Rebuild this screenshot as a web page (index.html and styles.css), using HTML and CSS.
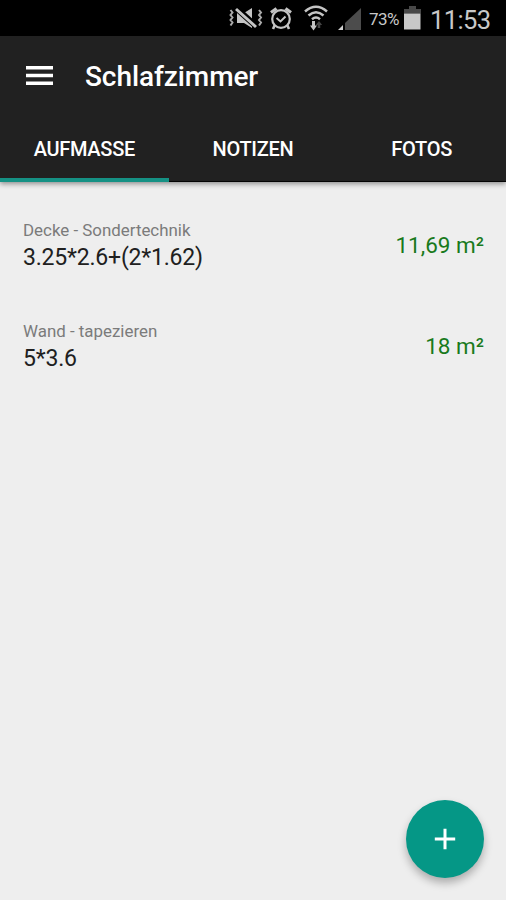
FILE: index.html
```html
<!DOCTYPE html>
<html lang="de">
<head>
<meta charset="utf-8">
<title>Schlafzimmer</title>
<link rel="stylesheet" href="styles.css">
</head>
<body>
<div class="status">
  <svg class="mute" width="34" height="36" viewBox="0 0 34 36" fill="none">
    <path d="M8 13h7l8-5v20l-8-5H8z" fill="#c4c4c4"/>
    <path d="M7 8L28 27" stroke="#000" stroke-width="6"/>
    <path d="M7 9L27 27" stroke="#c4c4c4" stroke-width="3"/>
    <path d="M1.500 10l2 2.500-2 2.500 2 2.500-2 2.500 2 2.500-2 3M30 10l2 2.500-2 2.500 2 2.500-2 2.500 2 2.500-2 3" stroke="#aaa" stroke-width="2"/>
  </svg>
  <svg class="alarm" width="22" height="36" viewBox="0 0 22 36" fill="none" stroke="#c4c4c4">
    <circle cx="11" cy="19" r="8.800" stroke-width="2.200"/>
    <path d="M1 12.500l5.500-4M15.500 8.500l5.500 4" stroke-width="3.200"/>
    <path d="M4.800 25L3 29M17.200 25l1.800 4" stroke-width="2.600"/>
    <path d="M6.500 18l4 3.500 5-5" stroke-width="2"/>
  </svg>
  <svg class="wifi" width="24" height="36" viewBox="0 0 24 36" fill="none" stroke="#c4c4c4" stroke-width="2.500">
    <path d="M1 11.500q11-9.500 22 0M4.500 15.500q7.500-6.500 15 0M8 19.200q4-3.300 8 0"/>
    <path d="M9.500 21v6" stroke-width="3"/>
    <path d="M6 25.500h7l-3.500 5z" fill="#c4c4c4" stroke="none"/>
    <path d="M15 28v-5" stroke="#444" stroke-width="2.500"/>
    <path d="M11.800 25l3.200-4 3.200 4z" fill="#444" stroke="none"/>
  </svg>
  <svg class="signal" width="24" height="36" viewBox="0 0 24 36">
    <path d="M23 8v22H7v-7z" fill="#4c4c4c"/>
    <path d="M0 30l5-5v5z" fill="#d0d0d0"/>
  </svg>
  <span class="percent">73%</span>
  <svg class="battery" width="17" height="36" viewBox="0 0 17 36">
    <path d="M5 6h7v3h5v4.500H0V9h5z" fill="#484848"/>
    <path d="M0 13.500h16.500V29.500H0z" fill="#c8c8c8"/>
  </svg>
  <span class="clock">11:53</span>
</div>
<header class="bar">
  <div class="heading">
    <svg class="menu" width="27" height="20" viewBox="0 0 27 20" fill="#fff">
      <path d="M0 0h27v3.500H0zM0 7.700h27v3.500H0zM0 15.500h27v3.500H0z"/>
    </svg>
    <h1 class="title">Schlafzimmer</h1>
  </div>
  <nav class="tabs">
    <div class="tab active"><span>AUFMASSE</span></div>
    <div class="tab"><span>NOTIZEN</span></div>
    <div class="tab"><span>FOTOS</span></div>
  </nav>
</header>
<main class="list">
  <div class="row">
    <div>
      <div class="label">Decke - Sondertechnik</div>
      <div class="formula">3.25*2.6+(2*1.62)</div>
    </div>
    <div class="area">11,69 m²</div>
  </div>
  <div class="row">
    <div>
      <div class="label">Wand - tapezieren</div>
      <div class="formula">5*3.6</div>
    </div>
    <div class="area">18 m²</div>
  </div>
</main>
<div class="fab">
  <svg width="22" height="22" viewBox="0 0 22 22" stroke="#fff" stroke-width="3"><path d="M11 .8v20.400M.8 11h20.400"/></svg>
</div>
</body>
</html>
```

FILE: styles.css
```css
* {
  box-sizing: border-box;
}

body {
  margin: 0;
  height: 900px;
  overflow: hidden;
  display: flex;
  flex-direction: column;
  background: #eee;
  font-family: Roboto, "Liberation Sans", sans-serif;
}

svg {
  display: block;
  flex: none;
}

.status {
  height: 36px;
  flex: none;
  display: flex;
  align-items: center;
  padding-left: 229px;
  background: #000;
  color: #c8c8c8;
  white-space: nowrap;
}

.alarm { margin-left: 7px; }
.wifi { margin-left: 12px; }
.signal { margin-left: 10px; }

.percent {
  width: 30px;
  margin-left: 7px;
  padding-top: 2px;
  font-size: 17px;
  letter-spacing: -.6px;
}

.battery { margin-left: 5px; }

.clock {
  margin-left: 9px;
  padding-top: 4px;
  font-size: 25.500px;
  line-height: 32px;
  letter-spacing: -.6px;
}

.bar {
  height: 146px;
  flex: none;
  background: #212121;
  color: #fff;
  box-shadow: inset 0 -1px #050505, 0 2px 5px rgba(0, 0, 0, .4);
}

.heading {
  height: 80px;
  display: flex;
  align-items: center;
  padding-left: 26px;
}

.title {
  margin: 1px 0 0 32px;
  font-size: 28px;
  line-height: 36px;
  font-weight: 500;
  letter-spacing: -.08px;
}

.tabs {
  height: 66px;
  display: grid;
  grid-template-columns: repeat(3, 1fr);
  font-size: 20px;
  line-height: 24px;
  font-weight: 500;
  letter-spacing: -.3px;
}

.tab {
  padding-top: 21px;
  text-align: center;
}

.active {
  border-bottom: 4px solid #159184;
}

.list {
  padding: 28px 22px 0 23px;
}

.row {
  height: 101px;
  display: flex;
  justify-content: space-between;
}

.label {
  margin-top: 9px;
  font-size: 16.900px;
  line-height: 22px;
  color: #7b7b7b;
}

.formula {
  margin-top: 2px;
  font-size: 23px;
  line-height: 29px;
  letter-spacing: -.2px;
  color: #202020;
}

.area {
  margin-top: 21px;
  font-size: 22.500px;
  line-height: 28px;
  color: #197a1c;
}

.fab {
  position: absolute;
  left: 406px;
  top: 800px;
  width: 78px;
  height: 78px;
  border-radius: 50%;
  display: grid;
  place-items: center;
  background: #059786;
  box-shadow: 0 5px 8px rgba(0, 0, 0, .28);
}
```
